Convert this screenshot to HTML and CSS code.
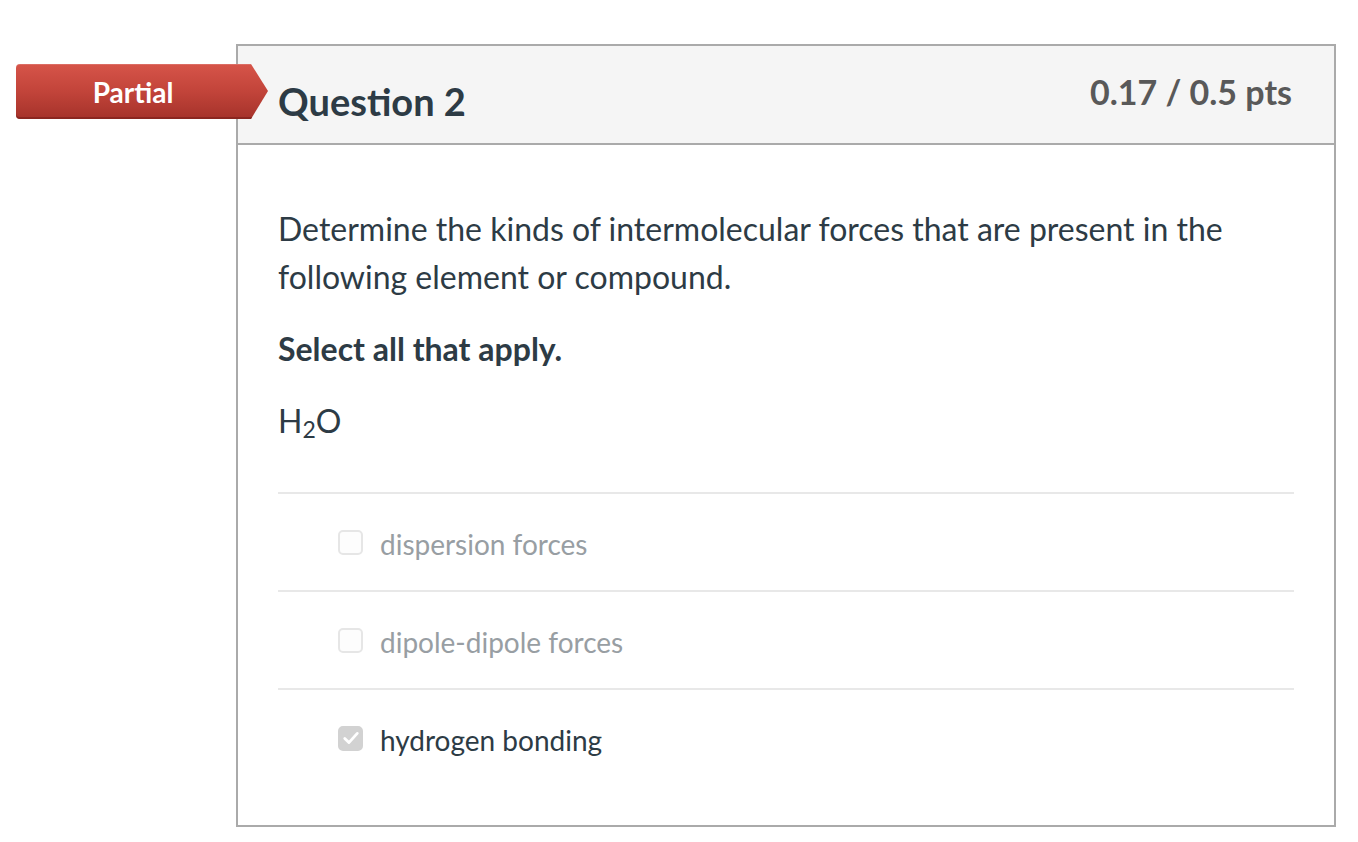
FILE: index.html
```html
<!DOCTYPE html>
<html>
<head>
<meta charset="utf-8">
<link rel="stylesheet" href="styles.css">
</head>
<body>
<div class="page">
  <div class="question">
    <div class="badge"><span>Partial</span></div>
    <div class="q-header">
      <h2 class="q-title">Question 2</h2>
      <div class="q-points">0.17 / 0.5 pts</div>
    </div>
    <div class="q-body">
      <p class="q-text">Determine the kinds of intermolecular forces that are present in the following element or compound.</p>
      <p class="q-text q-strong">Select all that apply.</p>
      <p class="q-text">H<sub>2</sub>O</p>
      <div class="answers">
        <div class="answer">
          <span class="box"></span>
          <span class="label muted">dispersion forces</span>
        </div>
        <div class="answer">
          <span class="box"></span>
          <span class="label muted">dipole-dipole forces</span>
        </div>
        <div class="answer">
          <span class="box checked">
            <svg viewBox="0 0 24 24" width="20" height="20"><path d="M4.5 12.5 L9.5 17.5 L19.5 6.5" fill="none" stroke="#fff" stroke-width="3.4" stroke-linecap="round" stroke-linejoin="round"/></svg>
          </span>
          <span class="label">hydrogen bonding</span>
        </div>
      </div>
    </div>
  </div>
</div>
</body>
</html>
```

FILE: styles.css
```css
* { box-sizing: border-box; }
html, body { margin: 0; padding: 0; background: #fff; }
body {
  font-family: Lato, "Open Sans", "Liberation Sans", sans-serif;
  color: #2d3b45;
}
.page {
  padding: 44px 0 0 236px;
}
.question {
  position: relative;
  width: 1100px;
  border: 2px solid #aaaaaa;
}
.badge {
  position: absolute;
  left: -222px;
  top: 18px;
  width: 252px;
  height: 55px;
  background: linear-gradient(to bottom, #d65449 0%, #c2443a 50%, #a5322a 100%);
  clip-path: polygon(0 0, 235px 0, 252px 27px, 235px 55px, 0 55px);
  border-radius: 4px 0 0 4px;
  display: flex;
  align-items: center;
  justify-content: center;
  padding-right: 18px;
  color: #fff;
  font-weight: 700;
  font-size: 28px;
  box-shadow: inset 0 -2px 0 rgba(120,30,25,0.6), inset 0 1px 0 rgba(255,255,255,0.15);
}
.q-header {
  height: 99px;
  background: #f5f5f5;
  border-bottom: 2px solid #aaaaaa;
  display: flex;
  justify-content: space-between;
  align-items: flex-start;
  padding: 28px 42px 0 40px;
}
.q-title {
  margin: 6px 0 0 0;
  font-size: 38px;
  line-height: 43px;
  font-weight: 700;
  color: #2d3b45;
}
.q-points {
  font-size: 34px;
  line-height: 36px;
  font-weight: 700;
  color: #595959;
}
.q-body {
  padding: 60px 40px 39px 40px;
}
.q-text {
  margin: 0 0 24px 0;
  font-size: 32px;
  line-height: 48px;
}
.q-strong { font-weight: 700; }
.q-text sub {
  font-size: 23px;
  line-height: 0;
  vertical-align: -5px;
}
.answers {
  margin-top: 47px;
}
.answer {
  height: 98px;
  border-top: 2px solid #e8e8e8;
  display: flex;
  align-items: center;
  padding-left: 60px;
  gap: 17px;
}
.box {
  width: 25px;
  height: 25px;
  border: 2px solid #e6e6e6;
  border-radius: 5px;
  background: #fdfdfd;
  display: flex;
  align-items: center;
  justify-content: center;
}
.box.checked {
  background: #d2d2d2;
  border-color: #d2d2d2;
}
.label {
  font-size: 28px;
  line-height: 36px;
  padding-top: 3px;
}
.muted { color: #989ea3; }
```
